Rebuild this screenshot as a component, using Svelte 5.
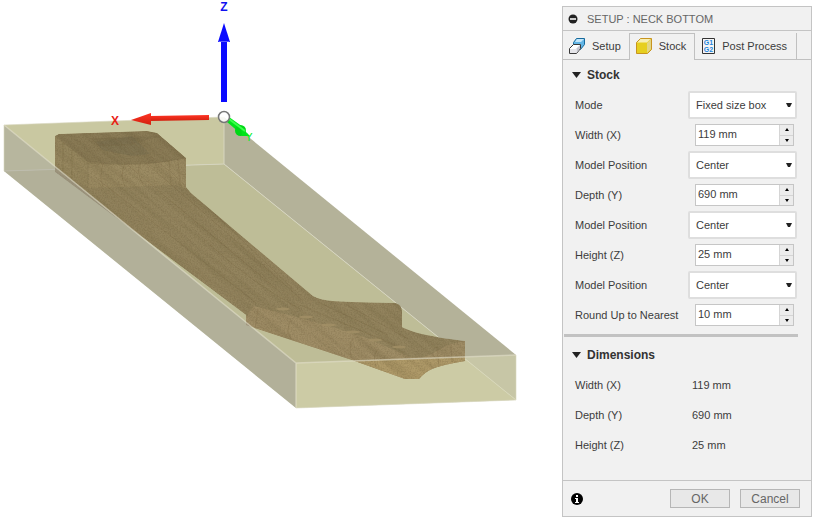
<script lang="ts">
  interface Field {
    id: string;
    label: string;
    kind: "select" | "number";
    value: string;
  }

  const positions = ["Center", "Offset from left side", "Offset from right side"];
  const modes = ["Fixed size box", "Relative size box", "From solid"];

  let fields = $state<Field[]>([
    { id: "mode", label: "Mode", kind: "select", value: "Fixed size box" },
    { id: "width", label: "Width (X)", kind: "number", value: "119 mm" },
    { id: "width-pos", label: "Model Position", kind: "select", value: "Center" },
    { id: "depth", label: "Depth (Y)", kind: "number", value: "690 mm" },
    { id: "depth-pos", label: "Model Position", kind: "select", value: "Center" },
    { id: "height", label: "Height (Z)", kind: "number", value: "25 mm" },
    { id: "height-pos", label: "Model Position", kind: "select", value: "Center" },
    { id: "round", label: "Round Up to Nearest", kind: "number", value: "10 mm" },
  ]);

  let tab = $state("Stock");
  let stockOpen = $state(true);
  let dimsOpen = $state(true);

  const valueOf = (id: string) => fields.find((f) => f.id === id)?.value ?? "";

  let dimensions = $derived([
    { label: "Width (X)", value: valueOf("width") },
    { label: "Depth (Y)", value: valueOf("depth") },
    { label: "Height (Z)", value: valueOf("height") },
  ]);

  function step(field: Field, by: number) {
    field.value = `${Math.max(0, parseFloat(field.value) + by)} mm`;
  }

  // tuner holes in the headstock
  const holes = [
    [283, 309],
    [306, 317],
    [329, 325],
    [353, 332],
    [375, 340],
    [399, 347],
  ];
</script>

{#snippet caret(open: boolean)}
  <svg class="caret" class:closed={!open} width="9" height="6" viewBox="0 0 9 6" aria-hidden="true">
    <path d="M0 0h9L4.5 6z" fill="#222" />
  </svg>
{/snippet}

<main class="workspace">
  <svg class="scene" viewBox="0 0 562 527" role="img" aria-label="Stock preview">
    <defs>
      <path
        id="neck"
        d="M55 136l4-2 60-2 28-1 10 2 29 25v29l5 6 122 103q7 4 20 5l20 1 43 1q6 2 6 8v16q8 4 20 7 22 5 43 7v20q-24 4-33 8-7 3-13 10h-14l-53-19-100-33-6-2v-10L55 172z"
      />
      <clipPath id="neck-clip"><use href="#neck" /></clipPath>
      <filter id="fine" x="0" y="0" width="1" height="1" color-interpolation-filters="sRGB">
        <feTurbulence type="fractalNoise" baseFrequency=".7" numOctaves="2" seed="4" />
        <feColorMatrix values="0 0 0 0 .32  0 0 0 0 .27  0 0 0 0 .15  2 0 0 0 -.8" />
      </filter>
      <filter id="streak" x="0" y="0" width="1" height="1" color-interpolation-filters="sRGB">
        <feTurbulence type="fractalNoise" baseFrequency=".012 .16" numOctaves="3" seed="8" />
        <feColorMatrix values="0 0 0 0 .32  0 0 0 0 .27  0 0 0 0 .15  2 0 0 0 -.8" />
      </filter>
      <linearGradient id="red" x1="0" y1="0" x2="0" y2="1">
        <stop offset="0" stop-color="#ff3424" />
        <stop offset="1" stop-color="#d2200e" />
      </linearGradient>
    </defs>

    <!-- far faces of the stock -->
    <path d="M4 125l220-8v47L4 171z" fill="#c9c8a1" />
    <path d="M4 171l220-7 292 236-220 8z" fill="#bebd97" />
    <path d="M224 117l292 238v45L224 164z" fill="#b4b299" />
    <path d="M4 171l220-7 292 236M224 117v47" fill="none" stroke="#d6d5bf" stroke-width="1" />
    <!-- front face -->
    <path d="M296 363l220-8v45l-220 8z" fill="#dad9b3" opacity=".5" />

    <g clip-path="url(#neck-clip)">
      <use href="#neck" fill="#93845e" />
      <path d="M55 136l33 26v25l-33-15z" fill="#96875f" />
      <path d="M88 162q50 6 98-4v31l-10-4-88 3z" fill="#9b8b63" />
      <path d="M55 136l4-2 88-3 10 2 29 25q-48 10-98 4z" fill="#8a7b56" />
      <path d="M93 140l6-2 62-2-30 8-32 2z" fill="#76694a" opacity=".3" />
      <path d="M96 142l6 8 30 6 18-2-18-18z" fill="#6e684c" opacity=".3" />
      <path d="M92 139h40v6h-34z" fill="none" stroke="#7a6b49" opacity=".4" />
      <path d="M88 188v-25q50 5 98-5" fill="none" stroke="#7b6b48" opacity=".3" />
      <path
        d="M246 317l8-11 65 17 45 14 46 20q16 2 27-6 12-8 28-10v40h-70l-149-48z"
        fill="#9f8d66"
      />
      <path d="M296 363l170-6v30H296z" fill="#b8a16c" opacity=".65" />
      <g fill="none" stroke="#7d6b47" opacity=".3">
        <path d="M103 164q-4 12 0 23M125 164q-6 12 0 22M141 162q-6 10 2 22M169 160l2 25M178 159l2 27M63 143v30M72 150v28" />
        <path d="M258 309l-3 20M291 320q-6 10 0 19M353 338q-5 10-1 20M378 349q-6 8-2 17M437 347l2 20M451 344l1 18" />
        <path d="M113 137q50 38 190 164M100 142l180 150M130 140l42 33 120 115M96 178q70 54 160 125M210 245q45 40 90 64M300 305l100 42M318 302l70 33M345 304l63 35" />
      </g>
      <g transform="rotate(39 55 136)" opacity=".16">
        <rect x="20" y="-100" width="560" height="360" filter="url(#streak)" />
      </g>
      <rect x="50" y="125" width="420" height="260" filter="url(#fine)" opacity=".22" />
      {#each holes as [cx, cy]}
        <ellipse {cx} {cy} rx="7" ry="1.5" fill="#a39067" opacity=".8" />
      {/each}
    </g>

    <!-- near side and its bright edges -->
    <path d="M4 125l292 238v45L4 171z" fill="#a5a49b" opacity=".5" />
    <path d="M4 125l292 238 220-8M296 363v45" fill="none" stroke="#e2e0cc" stroke-width="1.5" opacity=".6" />
    <path d="M4 125l220-8M4 125v46M516 355v45l-220 8" fill="none" stroke="#d8d7bf" opacity=".6" />

    <!-- work coordinate axes -->
    <path d="M221 41h6v61h-6z" fill="#0a0aff" />
    <path d="M224 23l6 19h-12z" fill="#0a0aff" />
    <path d="M219 41.5h10" stroke="#5a5aff" />
    <path d="M150 116l59-1v5l-59 1z" fill="url(#red)" />
    <path d="M131 120l20-7v12z" fill="url(#red)" />
    <path d="M229 117l14 10-3 6-13-11z" fill="#00e31a" />
    <circle cx="240.5" cy="130.5" r="5.5" fill="#00d816" />
    <path d="M241 127l9 9h-8z" fill="#00e31a" />
    <path d="M229 119l16 12" stroke="#3cff4b" stroke-width="2" />
    <circle cx="224" cy="117" r="5.5" fill="#fff" fill-opacity=".85" stroke="#777" stroke-width="1.5" />
    <text x="224" y="11" fill="#1111f0">Z</text>
    <text x="115" y="125" fill="#e82014">X</text>
    <text class="thin" x="249" y="141" fill="#00ee1c">Y</text>
  </svg>

  <form class="panel" onsubmit={(e) => e.preventDefault()}>
    <header>
      <svg width="10" height="10" viewBox="0 0 10 10" aria-hidden="true">
        <circle cx="5" cy="5" r="4.5" fill="#222" />
        <path d="M2 4h6v2H2z" fill="#ccc" />
      </svg>
      <h1>SETUP : NECK BOTTOM</h1>
    </header>

    <nav>
      <button type="button" class:active={tab === "Setup"} onclick={() => (tab = "Setup")}>
        <svg width="16" height="16" viewBox="0 0 16 16" aria-hidden="true">
          <path d="M4.5 4.5l3-4h8v6l-4 5h-2v-5h-5z" fill="#62b5e5" stroke="#176a9c" />
          <path d="M8 1h7l-3 3H6z" fill="#c3e6fa" />
          <path d="M.5 10.5l4-4h7v4l-4 5h-7z" fill="#fff" stroke="#3a3a3a" />
          <path d="M7.5 10.5L11 7v3.5L7.5 15z" fill="#c6c6d0" />
          <path d="M1 11h6v4H1z" fill="#e6e6ea" />
        </svg>
        Setup
      </button>
      <button type="button" class:active={tab === "Stock"} onclick={() => (tab = "Stock")}>
        <svg width="16" height="16" viewBox="0 0 16 16" aria-hidden="true">
          <path d="M.5 4.5l4-4h11v11l-4 4H.5z" fill="#e6cf1f" />
          <path d="M1 4.5l4-4h10l-4 4z" fill="#f7efb4" />
          <path d="M11 5l4-4v10l-4 4z" fill="#e2d684" />
          <path d="M.5 4.5l4-4h11v11l-4 4H.5z" fill="none" stroke="#c89420" />
        </svg>
        Stock
      </button>
      <button type="button" class:active={tab === "Post Process"} onclick={() => (tab = "Post Process")}>
        <svg width="13" height="16" viewBox="0 0 13 16" aria-hidden="true">
          <path d="M.5.5h12v15H.5z" fill="#f5f5f5" stroke="#333" />
          <text class="code" x="6.5" y="7">G1</text>
          <text class="code" x="6.5" y="14">G2</text>
        </svg>
        Post Process
      </button>
    </nav>

    <div class="body">
      <section>
        <h2>
          <button type="button" onclick={() => (stockOpen = !stockOpen)}>{@render caret(stockOpen)}Stock</button>
        </h2>
        {#if stockOpen}
          {#each fields as field (field.id)}
            <div class="row">
              <label for={field.id}>{field.label}</label>
              {#if field.kind === "select"}
                <span class="select">
                  <select id={field.id} bind:value={field.value}>
                    {#each field.id === "mode" ? modes : positions as option}
                      <option>{option}</option>
                    {/each}
                  </select>
                  <svg width="6" height="4" viewBox="0 0 6 4" aria-hidden="true">
                    <path d="M0 0h6L4 4H2z" fill="#222" />
                  </svg>
                </span>
              {:else}
                <span class="spinner">
                  <input id={field.id} type="text" bind:value={field.value} />
                  <span class="steps">
                    <button type="button" aria-label="Increase {field.label}" onclick={() => step(field, 1)}>
                      <svg width="4" height="3" viewBox="0 0 4 3"><path d="M0 3h4L2 0z" /></svg>
                    </button>
                    <button type="button" aria-label="Decrease {field.label}" onclick={() => step(field, -1)}>
                      <svg width="4" height="3" viewBox="0 0 4 3"><path d="M0 0h4L2 3z" /></svg>
                    </button>
                  </span>
                </span>
              {/if}
            </div>
          {/each}
        {/if}
      </section>

      <hr />

      <section>
        <h2>
          <button type="button" onclick={() => (dimsOpen = !dimsOpen)}>{@render caret(dimsOpen)}Dimensions</button>
        </h2>
        {#if dimsOpen}
          <dl>
            {#each dimensions as dim}
              <div class="row">
                <dt>{dim.label}</dt>
                <dd>{dim.value}</dd>
              </div>
            {/each}
          </dl>
        {/if}
      </section>
    </div>

    <footer>
      <svg width="12" height="12" viewBox="0 0 12 12" aria-hidden="true">
        <circle cx="6" cy="6" r="6" />
        <path d="M5 2h2v2H5zM4 5h3v4h1v1H4V9h1V6H4z" fill="#fff" />
      </svg>
      <button type="submit">OK</button>
      <button type="button">Cancel</button>
    </footer>
  </form>
</main>

<style>
  :global(body) {
    background: #fff;
  }
  .workspace {
    display: flex;
    align-items: flex-start;
    padding-right: 6px;
    font-family: "Liberation Sans", Arial, sans-serif;
    font-size: 11px;
    color: #3c3c3c;
  }
  .scene {
    display: block;
    flex: 1 1 0;
    min-width: 0;
  }
  .scene text {
    font-size: 12px;
    font-weight: 700;
    text-anchor: middle;
  }
  .scene .thin {
    font-size: 11px;
    font-weight: 400;
  }

  .panel {
    flex: 0 0 250px;
    box-sizing: border-box;
    margin-top: 6px;
    border: 1px solid #c4c4c4;
    background: #f1f1f1;
  }
  .panel svg {
    flex: none;
  }
  button,
  input,
  select {
    font: inherit;
    color: inherit;
  }
  button {
    border: 0;
    padding: 0;
    background: none;
  }

  header {
    display: flex;
    align-items: center;
    gap: 9px;
    height: 23px;
    padding-left: 5px;
    border-bottom: 1px solid #c4c4c4;
  }
  h1 {
    margin: 0;
    font-size: 11px;
    font-weight: 400;
    color: #666;
  }

  nav {
    display: flex;
    height: 29px;
    padding-top: 2px;
    box-sizing: border-box;
    box-shadow: inset 0 -1px #c0c0c0;
  }
  nav button {
    display: flex;
    align-items: center;
    gap: 7px;
    padding: 0 9px 2px 7px;
    border-right: 1px solid #c0c0c0;
    white-space: nowrap;
  }
  nav button.active {
    padding: 0 8px 2px 6px;
    border-top: 1px solid #c0c0c0;
    background: #f1f1f1;
  }
  nav button:first-child {
    padding: 0 8px 2px 6px;
  }
  .code {
    font-size: 7px;
    font-weight: 700;
    text-anchor: middle;
    fill: #2384dc;
  }

  .body {
    padding-bottom: 20px;
  }
  h2 {
    margin: 0;
    font-size: 12px;
  }
  h2 button {
    display: flex;
    align-items: center;
    gap: 6px;
    height: 30px;
    padding-left: 9px;
    font-weight: 700;
    color: #333;
  }
  .caret.closed {
    transform: rotate(-90deg);
  }

  .row {
    display: flex;
    align-items: center;
    height: 30px;
    padding: 0 14px 0 12px;
  }
  .row label,
  dt {
    flex: 1;
  }
  dl,
  dd {
    margin: 0;
  }
  dd {
    flex: 0 0 105px;
  }
  .select {
    position: relative;
    width: 109px;
  }
  .select select {
    appearance: none;
    display: block;
    box-sizing: border-box;
    width: 100%;
    height: 28px;
    padding: 0 16px 0 6px;
    border: 2px solid #dedede;
    border-radius: 2px;
    background: #fff;
  }
  .select svg {
    position: absolute;
    right: 5px;
    top: 12px;
    pointer-events: none;
  }
  .spinner {
    display: flex;
    box-sizing: border-box;
    width: 99px;
    height: 22px;
    margin-right: 3px;
    border: 1px solid #c6c6c6;
    background: #fff;
  }
  .spinner input {
    flex: 1;
    min-width: 0;
    padding: 0 0 2px 2px;
    border: 0;
    background: none;
  }
  .steps {
    display: flex;
    flex-direction: column;
    width: 13px;
    background: #ececec;
    border-left: 1px solid #d5d5d5;
  }
  .steps button {
    display: flex;
    flex: 1;
    align-items: center;
    justify-content: center;
  }
  .steps button + button {
    border-top: 1px solid #d5d5d5;
  }

  hr {
    height: 3px;
    margin: 4px 13px 3px 1px;
    border: 0;
    background: #c2c2c2;
  }

  footer {
    display: flex;
    align-items: center;
    gap: 10px;
    height: 35px;
    padding: 0 11px 0 8px;
    border-top: 1px solid #c4c4c4;
  }
  footer svg {
    margin-right: auto;
  }
  footer button {
    width: 60px;
    height: 19px;
    border: 1px solid #b6b6b6;
    background: #e8e8e8;
    font-size: 12px;
    color: #666;
  }
</style>
